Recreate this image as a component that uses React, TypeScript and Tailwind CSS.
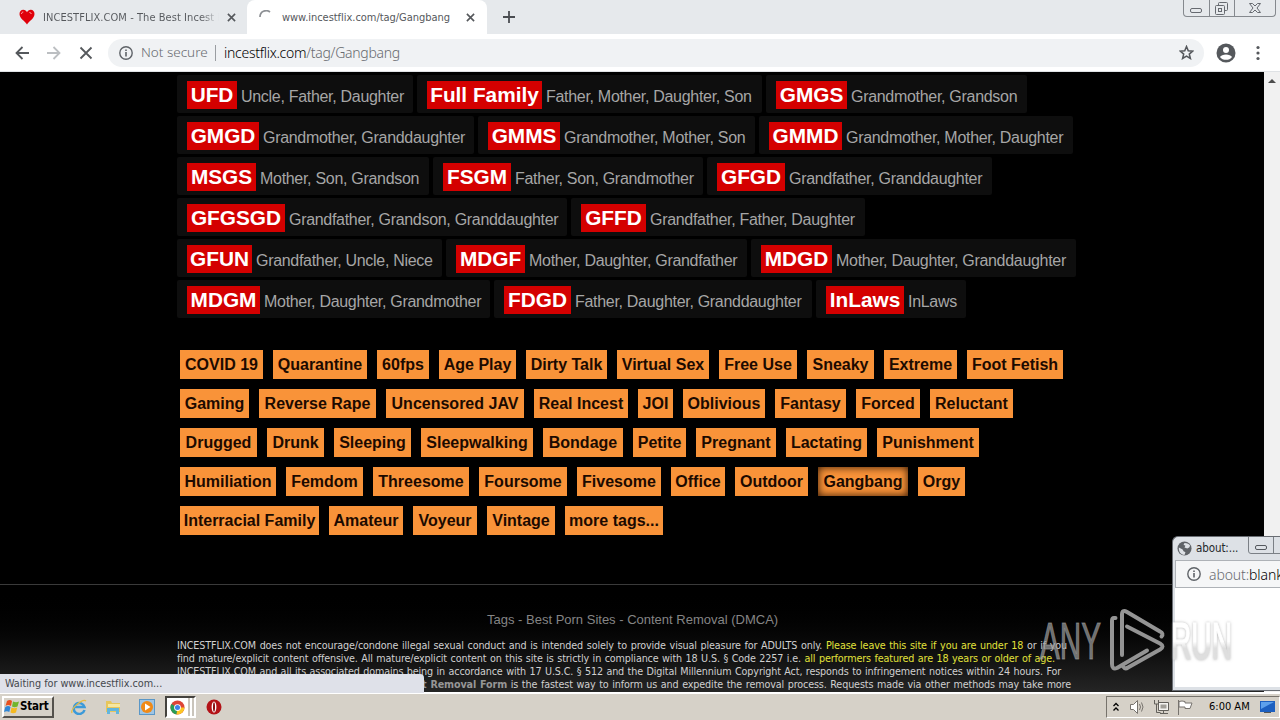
import { ReactNode } from 'react';

type Role = { code: string; label: string; card: string; box: string };
type Tag = { name: string; w: string; active?: boolean };

const roles: Role[][] = [
  [
    { code: 'UFD', label: 'Uncle, Father, Daughter', card: 'w-[236px]', box: 'w-[50px]' },
    { code: 'Full Family', label: 'Father, Mother, Daughter, Son', card: 'w-[345px]', box: 'w-[115px]' },
    { code: 'GMGS', label: 'Grandmother, Grandson', card: 'w-[261px]', box: 'w-[71px]' },
  ],
  [
    { code: 'GMGD', label: 'Grandmother, Granddaughter', card: 'w-[297px]', box: 'w-[72px]' },
    { code: 'GMMS', label: 'Grandmother, Mother, Son', card: 'w-[277px]', box: 'w-[72px]' },
    { code: 'GMMD', label: 'Grandmother, Mother, Daughter', card: 'w-[314px]', box: 'w-[73px]' },
  ],
  [
    { code: 'MSGS', label: 'Mother, Son, Grandson', card: 'w-[252px]', box: 'w-[69px]' },
    { code: 'FSGM', label: 'Father, Son, Grandmother', card: 'w-[270px]', box: 'w-[68px]' },
    { code: 'GFGD', label: 'Grandfather, Granddaughter', card: 'w-[285px]', box: 'w-[68px]' },
  ],
  [
    { code: 'GFGSGD', label: 'Grandfather, Grandson, Granddaughter', card: 'w-[390px]', box: 'w-[98px]' },
    { code: 'GFFD', label: 'Grandfather, Father, Daughter', card: 'w-[294px]', box: 'w-[65px]' },
  ],
  [
    { code: 'GFUN', label: 'Grandfather, Uncle, Niece', card: 'w-[265px]', box: 'w-[65px]' },
    { code: 'MDGF', label: 'Mother, Daughter, Grandfather', card: 'w-[301px]', box: 'w-[69px]' },
    { code: 'MDGD', label: 'Mother, Daughter, Granddaughter', card: 'w-[325px]', box: 'w-[71px]' },
  ],
  [
    { code: 'MDGM', label: 'Mother, Daughter, Grandmother', card: 'w-[313px]', box: 'w-[73px]' },
    { code: 'FDGD', label: 'Father, Daughter, Granddaughter', card: 'w-[318px]', box: 'w-[67px]' },
    { code: 'InLaws', label: 'InLaws', card: 'w-[150px]', box: 'w-[78px]' },
  ],
];

const tags: Tag[][] = [
  [
    { name: 'COVID 19', w: 'w-[83px]' },
    { name: 'Quarantine', w: 'w-[94px]' },
    { name: '60fps', w: 'w-[52px]' },
    { name: 'Age Play', w: 'w-[77px]' },
    { name: 'Dirty Talk', w: 'w-[81px]' },
    { name: 'Virtual Sex', w: 'w-[92px]' },
    { name: 'Free Use', w: 'w-[78px]' },
    { name: 'Sneaky', w: 'w-[67px]' },
    { name: 'Extreme', w: 'w-[73px]' },
    { name: 'Foot Fetish', w: 'w-[96px]' },
  ],
  [
    { name: 'Gaming', w: 'w-[69px]' },
    { name: 'Reverse Rape', w: 'w-[117px]' },
    { name: 'Uncensored JAV', w: 'w-[138px]' },
    { name: 'Real Incest', w: 'w-[94px]' },
    { name: 'JOI', w: 'w-[35px]' },
    { name: 'Oblivious', w: 'w-[82px]' },
    { name: 'Fantasy', w: 'w-[71px]' },
    { name: 'Forced', w: 'w-[64px]' },
    { name: 'Reluctant', w: 'w-[83px]' },
  ],
  [
    { name: 'Drugged', w: 'w-[77px]' },
    { name: 'Drunk', w: 'w-[57px]' },
    { name: 'Sleeping', w: 'w-[77px]' },
    { name: 'Sleepwalking', w: 'w-[112px]' },
    { name: 'Bondage', w: 'w-[80px]' },
    { name: 'Petite', w: 'w-[53px]' },
    { name: 'Pregnant', w: 'w-[80px]' },
    { name: 'Lactating', w: 'w-[81px]' },
    { name: 'Punishment', w: 'w-[102px]' },
  ],
  [
    { name: 'Humiliation', w: 'w-[96px]' },
    { name: 'Femdom', w: 'w-[77px]' },
    { name: 'Threesome', w: 'w-[96px]' },
    { name: 'Foursome', w: 'w-[88px]' },
    { name: 'Fivesome', w: 'w-[84px]' },
    { name: 'Office', w: 'w-[54px]' },
    { name: 'Outdoor', w: 'w-[73px]' },
    { name: 'Gangbang', w: 'w-[90px]', active: true },
    { name: 'Orgy', w: 'w-[47px]' },
  ],
  [
    { name: 'Interracial Family', w: 'w-[139px]' },
    { name: 'Amateur', w: 'w-[74px]' },
    { name: 'Voyeur', w: 'w-[64px]' },
    { name: 'Vintage', w: 'w-[68px]' },
    { name: 'more tags...', w: 'w-[98px]' },
  ],
];

function Cross({ className }: { className: string }) {
  return (
    <svg className={className} viewBox="0 0 10 10" stroke="currentColor" fill="none">
      <path d="M1 1l8 8M9 1l-8 8" strokeWidth="1.8" />
    </svg>
  );
}

function InfoIcon() {
  return (
    <svg className="size-[14px] shrink-0 text-[#5f6368]" viewBox="0 0 14 14" fill="none" stroke="currentColor">
      <circle cx="7" cy="7" r="6.2" strokeWidth="1.4" />
      <path d="M7 6v4.4M7 3.4v1.5" strokeWidth="1.6" />
    </svg>
  );
}

function TabStrip() {
  return (
    <div className="relative flex h-[34px] bg-[#e6e9ec] text-[11px] text-[#55585c]">
      <div className="flex w-[247px] items-center pl-[19px]">
        <svg className="size-4 shrink-0" viewBox="0 0 16 16">
          <path d="M8 15.5C6 12 .5 9.500.5 5 .5 2.500 2 .8 4.300.8 6 .8 7.300 1.800 8 3.200 8.700 1.800 10 .8 11.800.8 14 .8 15.500 2.500 15.500 5 15.500 9.500 10 12 8 15.500z" fill="#e0000a" />
          <path d="M2.500 5c0-1.200.8-2 1.800-2M10.500 3.500l2 1" stroke="#ffb3b3" fill="none" />
        </svg>
        <div className="ml-[8px] mt-[2px] w-[176px] whitespace-nowrap bg-linear-to-r from-[#55585c] from-90% to-transparent bg-clip-text tracking-[0.060px] text-transparent">
          INCESTFLIX.COM - The Best Incest F
        </div>
        <Cross className="ml-[8px] size-[9px]" />
      </div>
      <div className="flex w-[240px] items-center rounded-t-lg bg-white pl-3">
        <svg className="size-[14px] shrink-0" viewBox="0 0 14 14" fill="none">
          <path d="M1 7a6.200 6.200 0 0 1 10-5" stroke="#8d9094" strokeWidth="1.700" />
        </svg>
        <span className="ml-[9px] mt-[2px] w-[184px] whitespace-nowrap tracking-[-0.040px]">www.incestflix.com/tag/Gangbang</span>
        <Cross className="size-[9px]" />
      </div>
      <svg className="ml-4 mt-[11px] size-3 text-[#4a4d51]" viewBox="0 0 12 12">
        <path d="M6 0v12M0 6h12" stroke="currentColor" strokeWidth="1.800" />
      </svg>
      <div className="absolute right-1 top-0 flex h-[17px] w-[93px] rounded-b border border-t-0 border-[#85898e]">
        <svg className="h-full w-full" viewBox="0 0 91 16" fill="none" stroke="#666a70">
          <path d="M25.500 0v16M50.500 0v16" stroke="#85898e" />
          <rect x="6.500" y="8.500" width="11" height="4" rx="1.500" />
          <rect x="34.500" y="2.500" width="9" height="8" rx="1" />
          <rect x="31.500" y="5.500" width="9" height="9" rx="1" fill="#e6e9ec" />
          <rect x="34.500" y="8.500" width="3" height="3" />
          <path d="M65.500 3.500h3l2.500 2.500 2.500-2.500h3l-3.500 4.500 3.500 4.500h-3l-2.500-2.500-2.500 2.500h-3l3.500-4.500z" />
        </svg>
      </div>
    </div>
  );
}

function Toolbar() {
  return (
    <div className="flex h-[38px] items-center border-b border-[#dfe2e5] bg-white">
      <svg className="ml-[15px] h-4 w-[80px] shrink-0" viewBox="0 0 80 16" fill="none" strokeWidth="1.800">
        <path d="M14 8H1.500M7.500 2l-6 6 6 6" stroke="#55585c" />
        <path d="M32 8h12.500M38.500 2l6 6-6 6" stroke="#bcbfc2" />
        <path d="M65.500 2.500l11 11M76.500 2.500l-11 11" stroke="#55585c" />
      </svg>
      <div className="ml-[13px] flex h-7 w-[1096px] shrink-0 items-center rounded-full bg-[#f0f2f4] pl-[11px] text-[14px] text-[#686b70]">
        <InfoIcon />
        <span className="ml-2 w-[67px] whitespace-nowrap font-['Noto_Sans'] text-[13.500px] font-light">Not secure</span>
        <span className="ml-[7px] h-4 w-px bg-[#9a9da1]" />
        <span className="ml-2 whitespace-nowrap font-['Noto_Sans'] text-[14px] font-light tracking-[-0.280px]">
          <span className="text-black">incestflix.com</span>/tag/Gangbang
        </span>
        <svg className="ml-auto mr-[10px] size-[15px]" viewBox="0 0 24 24" fill="none" stroke="#55585c" strokeWidth="2.500">
          <path d="M12 2.500l2.800 6.700 7.200.6-5.500 4.700 1.700 7-6.200-3.800-6.200 3.800 1.700-7L2 9.800l7.200-.6z" />
        </svg>
      </div>
      <svg className="ml-3 size-5 shrink-0" viewBox="0 0 20 20">
        <circle cx="10" cy="10" r="9.500" fill="#55585c" />
        <circle cx="10" cy="7" r="3" fill="#fff" />
        <path d="M4 14c1.500-3.500 10.500-3.500 12 0-2.500 3.800-9.500 3.800-12 0z" fill="#fff" />
      </svg>
      <svg className="ml-[14px] h-4 w-4 shrink-0" viewBox="0 0 16 16" fill="#55585c">
        <circle cx="8" cy="2.500" r="1.600" />
        <circle cx="8" cy="8" r="1.600" />
        <circle cx="8" cy="13.500" r="1.600" />
      </svg>
    </div>
  );
}

function Line({ className, children }: { className: string; children: ReactNode }) {
  return <p className={`h-[13px] whitespace-nowrap [text-align-last:justify] ${className}`}>{children}</p>;
}

function Footer() {
  return (
    <footer className="h-[108px] border-t border-[#3a3a3a] bg-linear-to-b from-black to-[#252525] pl-[177px]">
      <div className="mt-[26px] pl-[310px] font-['Liberation_Sans'] text-[13px] leading-[18px] text-[#858585]">
        Tags - Best Porn Sites - Content Removal (DMCA)
      </div>
      <div className="mt-[10px] text-[10.700px] leading-[13px] tracking-[-0.130px] text-[#d0d0d0]">
        <Line className="w-[890px]">
          INCESTFLIX.COM does not encourage/condone illegal sexual conduct and is intended solely to provide visual
          pleasure for ADULTS only. <span className="text-[#e2e23a]">Please leave this site if you are under 18</span> or if you
        </Line>
        <Line className="w-[878px]">
          find mature/explicit content offensive. All mature/explicit content on this site is strictly in compliance with
          18 U.S. § Code 2257 i.e. <span className="text-[#e2e23a]">all performers featured are 18 years or older of age.</span>
        </Line>
        <Line className="w-[884px]">
          INCESTFLIX.COM and all its associated domains being in accordance with 17 U.S.C. § 512 and the Digital
          Millennium Copyright Act, responds to infringement notices within 24 hours. For
        </Line>
        <Line className="ml-[245px] w-[649px]">
          <span className="font-bold text-[#969696]">t Removal Form</span> is the fastest way to inform us and expedite
          the removal process. Requests made via other methods may take more
        </Line>
      </div>
    </footer>
  );
}

function Page() {
  return (
    <div className="flex h-[620px]">
      <main className="flex w-[1264px] flex-col justify-between overflow-hidden bg-black font-['Liberation_Sans']">
        <div>
          <div className="flex flex-col gap-[3px] pl-[177px] pt-[3px]">
            {roles.map((row, i) => (
              <div key={i} className="flex gap-1">
                {row.map((r) => (
                  <div key={r.code} className={`flex h-[38px] shrink-0 rounded-[2px] bg-[#0e0e0e] pl-[10px] pt-[6px] ${r.card}`}>
                    <span className={`h-7 shrink-0 whitespace-nowrap bg-[#d40000] text-center text-[20.800px] font-bold leading-7 text-white ${r.box}`}>
                      {r.code}
                    </span>
                    <span className="ml-1 whitespace-nowrap text-[16px] leading-[31px] tracking-[-0.300px] text-[#a6a6a6]">{r.label}</span>
                  </div>
                ))}
              </div>
            ))}
          </div>
          <div className="mt-[32px] flex flex-col gap-[10px] pl-[180px] text-[16px] font-bold text-[#1c0a00]">
            {tags.map((row, i) => (
              <div key={i} className="flex gap-[10px]">
                {row.map((t) => (
                  <span
                    key={t.name}
                    className={`h-[29.100px] shrink-0 whitespace-nowrap bg-[#f99339] text-center leading-[29px] ${t.w} ${t.active ? 'shadow-[inset_0_0_8px_#2a1200]' : ''}`}
                  >
                    {t.name}
                  </span>
                ))}
              </div>
            ))}
          </div>
        </div>
        <div className="font-['DejaVu_Sans_Condensed','DejaVu_Sans',sans-serif]">
          <Footer />
        </div>
      </main>
      <div className="w-4 bg-[#f1f1f1]">
        <svg className="h-4 w-4" viewBox="0 0 16 16">
          <path d="M4 11l4-4 4 4z" fill="#4c4c4c" />
        </svg>
      </div>
    </div>
  );
}

function Popup() {
  return (
    <div className="absolute left-[1172px] top-[536px] h-[155px] w-[108px] overflow-hidden rounded-tl-md border border-r-0 border-[#696d73] bg-[#dde1e6]">
      <div className="flex h-[23px] items-center pl-1 text-[11.500px] text-[#25282c]">
        <svg className="size-[15px] shrink-0" viewBox="0 0 16 16">
          <circle cx="8" cy="8" r="7.500" fill="#5f6368" />
          <path d="M2 7l4 2 1 2 2 1-1 3C4 15 1.500 11 2 7zM8 2l-1 2 2 1-1 2 3 1 2-1 1-2c-1-2-3-3-6-3z" fill="#dde1e6" />
        </svg>
        <span className="ml-1 whitespace-nowrap tracking-[-0.100px]">about:...</span>
        <svg className="ml-auto h-[17px] w-8 self-start" viewBox="0 0 32 17" fill="none" stroke="#7b8086">
          <path d="M.5 0v14q0 2.500 2.500 2.500h29M25.500 0v16" />
          <rect x="7.500" y="8.500" width="11" height="4" rx="1.500" stroke="#54585e" />
        </svg>
      </div>
      <div className="ml-[2px] flex h-[28px] items-center border border-r-0 border-[#aeb2b7] bg-[#f5f6f7] pl-[11px]">
        <InfoIcon />
        <span className="ml-2 whitespace-nowrap font-['Noto_Sans'] text-[14px] font-light tracking-[-0.100px] text-[#686b70]">
          about:<span className="text-black">blank</span>
        </span>
      </div>
      <div className="ml-[2px] h-[99px] bg-white" />
    </div>
  );
}

function Watermark() {
  return (
    <svg className="absolute left-[1036px] top-[604px] h-[74px] w-[204px]" viewBox="0 0 204 74">
      <defs>
        <linearGradient id="run" x1="0" y1="0" x2="0" y2="1">
          <stop offset="0.5" stopColor="#fff" />
          <stop offset="0.62" stopColor="#dedede" />
        </linearGradient>
        <filter id="halo" x="-10%" y="-10%" width="120%" height="120%">
          <feDropShadow dx="0" dy="0" stdDeviation="1.8" floodColor="#999" floodOpacity=".7" />
        </filter>
      </defs>
      <text
        x="4"
        y="55"
        fontFamily="Liberation Sans"
        fontSize="51"
        textLength="61"
        lengthAdjust="spacingAndGlyphs"
        fill="#a0a0a0"
        fillOpacity=".7"
        stroke="#a0a0a0"
        strokeOpacity=".6"
        strokeWidth="1.2"
      >
        ANY
      </text>
      <g fill="none" stroke="#949494" strokeWidth="4" strokeLinejoin="round" strokeLinecap="round">
        <path d="M79.500 14h-1.500q-2 0-2 3v43q0 6 5 4l30-17.500" />
        <path d="M86 51V11q0-6 5-3l33 19.500q4 2 1.500 5" />
        <path d="M91 22.500l33 17q5 3 0 6L92 63.500q-3 2-5-1" />
      </g>
      <text
        x="135"
        y="55"
        fontFamily="Liberation Sans"
        fontSize="51"
        textLength="61"
        lengthAdjust="spacingAndGlyphs"
        fill="url(#run)"
        stroke="url(#run)"
        strokeWidth="1.2"
        filter="url(#halo)"
      >
        RUN
      </text>
    </svg>
  );
}

function Taskbar() {
  return (
    <div className="flex h-7 items-center border-t-2 border-white bg-[#d6d1c8] text-[11.500px] text-black">
      <div className="ml-[2px] flex h-[22px] w-[52px] items-center border-2 border-b-[#55524d] border-l-white border-r-[#55524d] border-t-white font-bold">
        <svg className="h-4 w-[16px] shrink-0" viewBox="0 0 16 16">
          <path d="M3 2q3-2 5 0L7 7Q4 5 1.500 7z" fill="#e8501e" />
          <path d="M9 2.500q3 1.500 6 0L13.500 7.500q-3 1.500-5.500 0z" fill="#71b52d" />
          <path d="M1.300 8q3-2 5.200 0L5.300 13Q3 11.500 0 13z" fill="#2f86d6" />
          <path d="M7.500 8.500q3 1.500 5.700 0L12 13.500q-3 1.500-5.500 0z" fill="#f5b920" />
        </svg>
        <span className="text-[11.500px] tracking-[-0.200px]">Start</span>
      </div>
      <svg className="ml-[17px] size-4" viewBox="0 0 16 16" fill="none">
        <path d="M13.500 11A5.500 5.500 0 1 1 13.500 8H4" stroke="#3c9ad9" strokeWidth="2.500" />
        <path d="M1 14C-1 10 12-1 15 2" stroke="#e8bc42" strokeWidth="1.300" />
      </svg>
      <svg className="ml-[18px] size-4" viewBox="0 0 16 16">
        <path d="M1 2h5l1 2h8v9H1z" fill="#e7c65c" />
        <path d="M3 5h12v3H3z" fill="#f7e79f" />
        <path d="M2 15V9h12v6h-3v-3H5v3z" fill="#62b5dd" />
      </svg>
      <svg className="ml-[18px] size-4" viewBox="0 0 16 16">
        <rect x=".5" y=".5" width="15" height="15" fill="#9fc5e4" stroke="#5a97c7" />
        <circle cx="8" cy="8" r="6" fill="#f08a17" />
        <path d="M6 4.500l5.500 3.500L6 11.500z" fill="#fff" />
      </svg>
      <div className="ml-[10px] flex h-[22px] w-[31px] items-center border-2 border-b-white border-l-[#44423e] border-r-white border-t-[#44423e] bg-white pl-[3px]">
        <svg className="size-[15px] shrink-0" viewBox="0 0 16 16">
          <circle cx="8" cy="8" r="7.500" fill="#dd4436" />
          <path d="M8 8L1.500 4.200A7.500 7.500 0 0 0 7 15.400z" fill="#279d55" />
          <path d="M8 8h7.500A7.500 7.500 0 0 1 7 15.400z" fill="#fbc624" />
          <circle cx="8" cy="8" r="3.600" fill="#fff" />
          <circle cx="8" cy="8" r="2.700" fill="#3e82e8" />
        </svg>
        <span className="ml-[3px] h-full w-[2px] shrink-0 bg-[#c9c4bb]" />
        <span className="ml-[2px] h-full w-[2px] shrink-0 bg-[#c9c4bb]" />
      </div>
      <svg className="ml-[10px] size-4" viewBox="0 0 16 16">
        <circle cx="8" cy="8" r="7.500" fill="#b31217" />
        <ellipse cx="8" cy="8" rx="2.400" ry="5.500" fill="#fff" />
        <ellipse cx="8" cy="8" rx="1" ry="4.800" fill="#8a0c10" />
      </svg>
      <div className="ml-auto flex h-[22px] w-[174px] items-center border border-b-white border-l-[#77736c] border-r-white border-t-[#77736c] pl-[5px]">
        <svg className="h-3 w-2 shrink-0" viewBox="0 0 8 12" fill="none" stroke="#000" strokeWidth="1.300">
          <path d="M1.500 5L4 2.500 6.500 5M1.500 9.500L4 7l2.500 2.500" />
        </svg>
        <svg className="ml-[9px] size-4 shrink-0" viewBox="0 0 16 16" fill="none" stroke="#77736e">
          <path d="M1.500 5.500h3l4-4v13l-4-4h-3z" fill="#fff" />
          <path d="M10.500 5q2 3 0 6M12.500 3.500q3 4.500 0 9" />
        </svg>
        <svg className="ml-[8px] size-4 shrink-0" viewBox="0 0 16 16" fill="#f4f3f0" stroke="#63605b">
          <path d="M5.500 3.500h10v8h-10zM7 14.500h8M10.500 12v2" />
          <path d="M7.500 5.500h6v4h-6z" fill="#a19e98" stroke="none" />
          <path d="M1.500 1v4h4V1M3.500 5v8.500h4" fill="none" />
        </svg>
        <svg className="ml-[8px] size-4 shrink-0" viewBox="0 0 16 16" fill="#fff" stroke="#77736e">
          <path d="M1.500 1v15M2 2.500q3-1 6 0v1.500h7l-2 5.500H8V8H2z" />
        </svg>
        <span className="ml-4 whitespace-nowrap text-[11px]">6:00 AM</span>
        <svg className="ml-auto mr-1 h-3 w-[15px] shrink-0" viewBox="0 0 15 12">
          <rect width="15" height="11" fill="#1c5fc0" />
          <path d="M1 1h13L1 8z" fill="#5da0ec" />
          <path d="M4 11h7v1H4z" fill="#555" />
        </svg>
      </div>
    </div>
  );
}

export default function App() {
  return (
    <div className="relative h-[720px] w-[1280px] overflow-hidden font-['DejaVu_Sans_Condensed','DejaVu_Sans',sans-serif]">
      <TabStrip />
      <Toolbar />
      <Page />
      <div className="absolute left-0 top-[674px] h-[19px] w-[424px] rounded-tr-sm bg-[#dfe1e9] pl-[5px] text-[10.800px] leading-[19px] tracking-[-0.040px] text-[#45484d]">
        Waiting for www.incestflix.com...
      </div>
      <Taskbar />
      <Popup />
      <Watermark />
    </div>
  );
}
